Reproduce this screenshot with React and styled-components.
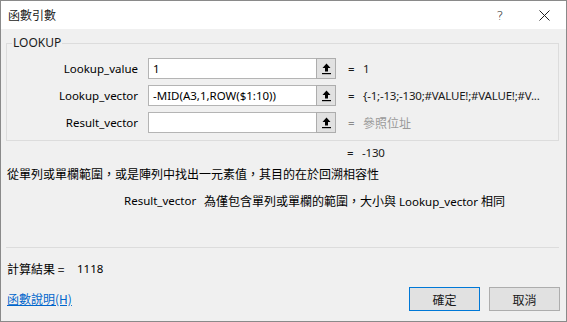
import React from "react";
import styled, { createGlobalStyle } from "styled-components";

const GlobalStyle = createGlobalStyle`
  html, body { margin: 0; padding: 0; background: #ffffff; }
  body {
    font-family: "Noto Sans", "Noto Sans CJK TC", sans-serif;
    font-size: 11.5px;
    color: #000;
  }
  * { box-sizing: border-box; }
`;

const cjk = `"Noto Sans CJK TC", sans-serif`;

const Window = styled.div`
  width: 567px;
  height: 322px;
  border: 1px solid #8a8a8a;
  display: flex;
  flex-direction: column;
  background: #f0f0f0;
  overflow: hidden;
`;

const TitleBar = styled.div`
  height: 28px;
  background: #ffffff;
  display: flex;
  align-items: center;
  padding-left: 7px;
  padding-right: 0;
  flex: none;
`;

const Title = styled.div`
  font-family: ${cjk};
  font-size: 12px;
  line-height: 16px;
  color: #1a1a1a;
  flex: 1;
`;

const TitleButton = styled.div`
  width: 44px;
  height: 28px;
  display: flex;
  align-items: center;
  justify-content: center;
  color: #222;
  font-size: 13px;
  font-family: "DejaVu Sans", sans-serif;
  font-weight: 300;
`;

const Body = styled.div`
  flex: 1;
  display: flex;
  flex-direction: column;
  padding: 0 6px 0 5px;
  background: #f0f0f0;
`;

const GroupBox = styled.fieldset`
  margin: 6px 0 0 0;
  padding: 7px 0 7px 0;
  border: 1px solid #dcdcdc;
  width: 553px;
  min-width: 0;
`;

const Legend = styled.legend`
  margin-left: 5px;
  padding: 0 1px;
  line-height: 16px;
  font-size: 12px;
  color: #1a1a1a;
`;

const ArgList = styled.div`
  display: flex;
  flex-direction: column;
  gap: 6px;
`;

const ArgRow = styled.div`
  display: flex;
  align-items: center;
  height: 21px;
`;

const ArgLabel = styled.div`
  width: 131px;
  text-align: right;
  line-height: 16px;
  flex: none;
`;

const ArgInput = styled.div`
  margin-left: 10px;
  width: 168px;
  height: 21px;
  background: #ffffff;
  border: 1px solid #b4b4b4;
  border-right: none;
  padding: 0 4px;
  line-height: 19px;
  white-space: nowrap;
  overflow: hidden;
  flex: none;
`;

const RefButton = styled.div`
  width: 20px;
  height: 21px;
  background: #e1e1e1;
  border: 1px solid #adadad;
  display: flex;
  align-items: center;
  justify-content: center;
  flex: none;
`;

const Equals = styled.div`
  width: 15px;
  margin-left: ${(p) => p.$offset || 12}px;
  line-height: 16px;
  color: ${(p) => (p.$muted ? "#8a8a8a" : "#1a1a1a")};
  flex: none;
`;

const ArgValue = styled.div`
  line-height: 16px;
  white-space: nowrap;
  letter-spacing: ${(p) => (p.$cjk ? "0" : "-0.2px")};
  color: ${(p) => (p.$muted ? "#9a9a9a" : "#1a1a1a")};
  font-family: ${(p) => (p.$cjk ? cjk : "inherit")};
  font-size: ${(p) => (p.$cjk ? "12px" : "inherit")};
`;

const ResultRow = styled.div`
  display: flex;
  margin-top: 4px;
  height: 16px;
`;

const Description = styled.div`
  margin-top: 5px;
  line-height: 16px;
  font-family: ${cjk};
  font-size: 12px;
  padding-left: 1px;
`;

const ArgHelp = styled.div`
  margin-top: 11px;
  display: flex;
  line-height: 16px;
  padding-left: 118px;
`;

const ArgHelpName = styled.span`
  width: 80px;
  flex: none;
`;

const ArgHelpText = styled.span`
  white-space: nowrap;
`;

const Cjk = styled.span`
  font-family: ${cjk};
  font-size: 12px;
`;

const Separator = styled.div`
  margin-top: 37px;
  height: 1px;
  background: #dcdcdc;
  width: 553px;
`;

const CalcRow = styled.div`
  margin-top: 13px;
  display: flex;
  line-height: 16px;
  padding-left: 1px;
`;

const CalcLabel = styled.span`
  font-family: ${cjk};
  font-size: 12px;
  width: 70px;
  flex: none;
`;

const Footer = styled.div`
  margin-top: 10px;
  display: flex;
  align-items: center;
  padding-left: 1px;
`;

const HelpLink = styled.a`
  font-family: ${cjk};
  font-size: 12px;
  color: #0066cc;
  text-decoration: underline;
  line-height: 16px;
  flex: 1;
  cursor: pointer;
`;

const DialogButton = styled.button`
  width: 71px;
  height: 24px;
  margin-left: 9px;
  background: #e1e1e1;
  border: 1px solid ${(p) => (p.$default ? "#0078d7" : "#adadad")};
  font-family: ${cjk};
  font-size: 12px;
  color: #1a1a1a;
  padding: 0;
`;

const UpArrow = () => (
  <svg width="9" height="12" viewBox="0 0 9 12">
    <path d="M4.5 0.5 L8.5 5 L6 5 L6 8.5 L3 8.5 L3 5 L0.5 5 Z" fill="#000" />
    <rect x="0" y="10" width="9" height="1.2" fill="#000" />
  </svg>
);

const CloseIcon = () => (
  <svg width="11" height="11" viewBox="0 0 11 11">
    <path d="M0.5 0.5 L10.5 10.5 M10.5 0.5 L0.5 10.5" stroke="#222" strokeWidth="1" />
  </svg>
);

const args = [
  { name: "Lookup_value", input: "1", value: "1" },
  { name: "Lookup_vector", input: "-MID(A3,1,ROW($1:10))", value: "{-1;-13;-130;#VALUE!;#VALUE!;#V..." },
  { name: "Result_vector", input: "", value: "參照位址", muted: true },
];

export default function App() {
  return (
    <>
      <GlobalStyle />
      <Window>
        <TitleBar>
          <Title>函數引數</Title>
          <TitleButton>?</TitleButton>
          <TitleButton>
            <CloseIcon />
          </TitleButton>
        </TitleBar>
        <Body>
          <GroupBox>
            <Legend>LOOKUP</Legend>
            <ArgList>
              {args.map((a) => (
                <ArgRow key={a.name}>
                  <ArgLabel>{a.name}</ArgLabel>
                  <ArgInput>{a.input}</ArgInput>
                  <RefButton>
                    <UpArrow />
                  </RefButton>
                  <Equals $muted={a.muted}>=</Equals>
                  <ArgValue $muted={a.muted} $cjk={a.muted}>{a.value}</ArgValue>
                </ArgRow>
              ))}
            </ArgList>
          </GroupBox>
          <ResultRow>
            <Equals $offset={341}>=</Equals>
            <ArgValue>-130</ArgValue>
          </ResultRow>
          <Description>從單列或單欄範圍，或是陣列中找出一元素值，其目的在於回溯相容性</Description>
          <ArgHelp>
            <ArgHelpName>Result_vector</ArgHelpName>
            <ArgHelpText>
              <Cjk>為僅包含單列或單欄的範圍，大小與</Cjk> Lookup_vector <Cjk>相同</Cjk>
            </ArgHelpText>
          </ArgHelp>
          <Separator />
          <CalcRow>
            <CalcLabel>計算結果 =</CalcLabel>
            <span>1118</span>
          </CalcRow>
          <Footer>
            <HelpLink>函數說明(H)</HelpLink>
            <DialogButton $default>確定</DialogButton>
            <DialogButton>取消</DialogButton>
          </Footer>
        </Body>
      </Window>
    </>
  );
}
